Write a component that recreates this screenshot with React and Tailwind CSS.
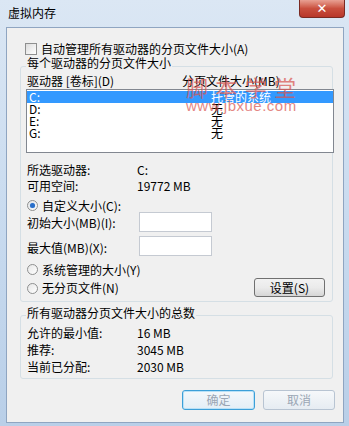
import React from "react";

const font = { fontFamily: '"Noto Sans CJK SC", "Liberation Sans", sans-serif' };

function Radio({ checked }) {
  return (
    <span className="inline-flex items-center justify-center w-[11px] h-[11px] rounded-full border border-[#8e8f8f] bg-gradient-to-br from-[#e6e6e6] to-white mr-[4px]">
      {checked && (
        <span className="w-[5px] h-[5px] rounded-full bg-[#2a6fc9] shadow-[0_0_1px_#7fb3f0]" />
      )}
    </span>
  );
}

function TextBox() {
  return <div className="w-[73px] h-[20px] border border-[#c5cad2] bg-white" />;
}

function App() {
  const drives = [
    { name: "C:", size: "托管的系统", selected: true },
    { name: "D:", size: "无" },
    { name: "E:", size: "无" },
    { name: "G:", size: "无" },
  ];

  return (
    <div
      className="relative w-[349px] h-[426px] overflow-hidden bg-gradient-to-b from-[#dbe7f4] via-[#c9dbef] to-[#b9cfe8] text-[12px] text-black"
      style={font}
    >
      {/* TITLE BAR */}
      <div className="flex h-[27px] items-start justify-between">
        <div className="pl-[8px] pt-[5px] text-[12px] leading-[16px] text-black">虚拟内存</div>
        <div className="mr-[4px] flex h-[18px] w-[46px] items-center justify-center rounded-b-[4px] border border-t-0 border-[#7a2a22] bg-gradient-to-b from-[#e8a093] via-[#c94f3e] to-[#b8372a]">
          <span className="text-[13px] font-bold leading-none text-white" style={{ fontFamily: '"DejaVu Sans", sans-serif' }}>
            ✕
          </span>
        </div>
      </div>

      {/* CLIENT */}
      <div className="ml-[6px] h-[396px] w-[338px] border border-[#8fa5c1] bg-[#f0f0f0]">
        {/* AUTO MANAGE */}
        <div className="flex items-center pl-[18px] pt-[14px] leading-[13px]">
          <span className="mr-[4px] inline-block h-[12px] w-[12px] border border-[#8e8f8f] bg-gradient-to-br from-[#dcdcdc] to-white" />
          自动管理所有驱动器的分页文件大小(A)
        </div>

        {/* PER DRIVE GROUP */}
        <div className="relative ml-[13px] mt-[11px] h-[236px] w-[313px] rounded-[3px] border border-[#d5dfe5]">
          <span className="absolute -top-[11px] left-[5px] bg-[#f0f0f0] px-[1px] leading-[14px]">
            每个驱动器的分页文件大小
          </span>

          <div className="flex pl-[6px] pt-[7px] leading-[13px]">
            <span className="w-[155px]">驱动器 [卷标](D)</span>
            <span>分页文件大小(MB)</span>
          </div>

          <div className="ml-[5px] mt-[2px] h-[64px] w-[308px] border border-[#828790] bg-white">
            {drives.map((d) => (
              <div
                key={d.name}
                className={`flex h-[12px] items-center pl-[2px] leading-[12px] ${
                  d.selected ? "mt-[1px] h-[12px] bg-[#3399ff] text-white" : ""
                }`}
              >
                <span className="w-[182px]">{d.name}</span>
                <span>{d.size}</span>
              </div>
            ))}
          </div>

          <div className="mt-[9px] pl-[6px] leading-[16px]">
            <div className="flex">
              <span className="w-[110px]">所选驱动器:</span>
              <span>C:</span>
            </div>
            <div className="flex">
              <span className="w-[110px]">可用空间:</span>
              <span>19772 MB</span>
            </div>
          </div>

          <div className="mt-[5px] flex h-[13px] items-center pl-[6px]">
            <Radio checked />
            自定义大小(C):
          </div>

          <div className="flex h-[20px] items-center pl-[6px]">
            <span className="w-[112px] pt-[2px]">初始大小(MB)(I):</span>
            <TextBox />
          </div>

          <div className="mt-[4px] flex h-[20px] items-center pl-[6px]">
            <span className="w-[112px] pt-[3px]">最大值(MB)(X):</span>
            <TextBox />
          </div>

          <div className="mt-[7px] flex h-[13px] items-center pl-[6px]">
            <Radio />
            系统管理的大小(Y)
          </div>

          <div className="mt-[1px] flex h-[20px] items-center justify-between pl-[6px] pr-[7px]">
            <span className="flex items-center pt-[2px]">
              <Radio />
              无分页文件(N)
            </span>
            <button className="h-[19px] w-[71px] rounded-[3px] border border-[#707070] bg-gradient-to-b from-[#f2f2f2] via-[#ebebeb] to-[#d6d6d6] leading-[17px]">
              设置(S)
            </button>
          </div>
        </div>

        {/* TOTALS GROUP */}
        <div className="relative ml-[13px] mt-[13px] h-[64px] w-[313px] rounded-[3px] border border-[#d5dfe5]">
          <span className="absolute -top-[10px] left-[5px] bg-[#f0f0f0] px-[1px] leading-[14px]">
            所有驱动器分页文件大小的总数
          </span>
          <div className="pl-[6px] pt-[8px] leading-[17px]">
            <div className="flex">
              <span className="w-[110px]">允许的最小值:</span>
              <span>16 MB</span>
            </div>
            <div className="flex">
              <span className="w-[110px]">推荐:</span>
              <span>3045 MB</span>
            </div>
            <div className="flex">
              <span className="w-[110px]">当前已分配:</span>
              <span>2030 MB</span>
            </div>
          </div>
        </div>

        {/* BUTTONS */}
        <div className="mt-[11px] flex justify-end gap-[8px] pr-[8px]">
          <button className="h-[20px] w-[73px] rounded-[3px] border border-[#3c9fd8] bg-gradient-to-b from-[#f4f8fb] to-[#e3eef6] text-[#9aa6b4] shadow-[inset_0_0_0_1px_#b9e1f7]">
            确定
          </button>
          <button className="h-[20px] w-[72px] rounded-[3px] border border-[#b8c4d2] bg-gradient-to-b from-[#f6f8fa] to-[#e6ecf2] text-[#9aa6b4]">
            取消
          </button>
        </div>
      </div>

      {/* WATERMARK */}
      <div className="pointer-events-none absolute left-[186px] top-[74px] text-[#d9534f] opacity-70">
        <div className="flex w-[110px] justify-between text-[22px] leading-[24px]">
          <span>脚</span>
          <span>本</span>
          <span>学</span>
          <span>堂</span>
        </div>
        <div className="text-[15px] leading-[16px] tracking-[0.5px]" style={{ fontFamily: '"Liberation Sans", sans-serif' }}>
          www.jbxue.com
        </div>
      </div>
    </div>
  );
}

export default App;
